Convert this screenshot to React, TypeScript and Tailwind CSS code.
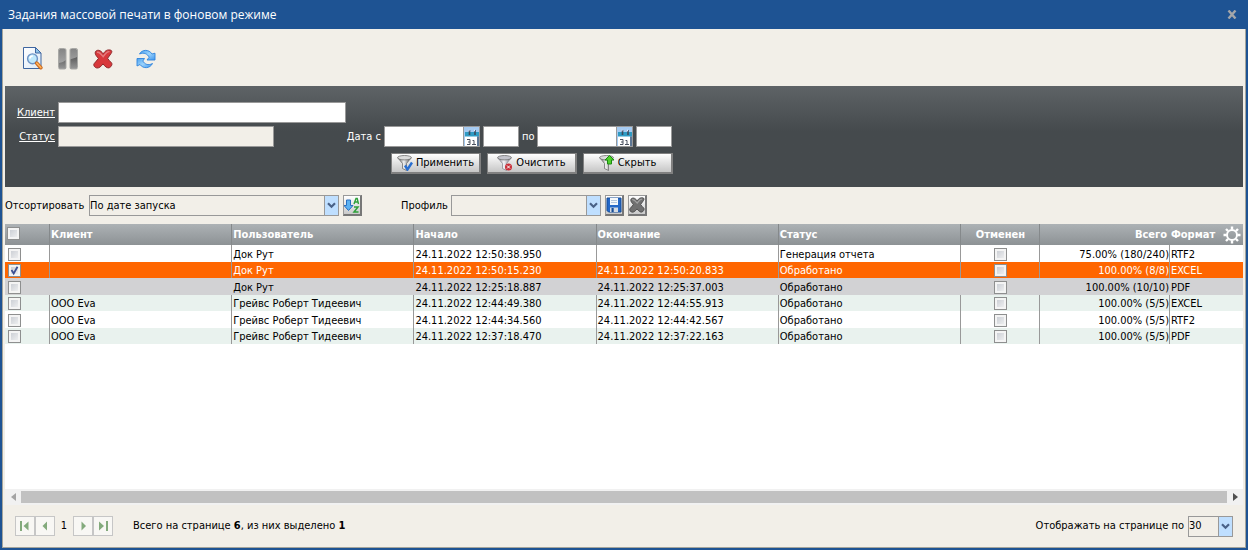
import React, { useState } from "react";

type Job = {
  id: number;
  client: string;
  user: string;
  start: string;
  end: string;
  status: string;
  total: string;
  format: string;
};

const JOBS: Job[] = [
  { id: 1, client: "",        user: "Док Рут",                 start: "24.11.2022 12:50:38.950", end: "",                        status: "Генерация отчета", total: "75.00% (180/240)", format: "RTF2"  },
  { id: 2, client: "",        user: "Док Рут",                 start: "24.11.2022 12:50:15.230", end: "24.11.2022 12:50:20.833", status: "Обработано",       total: "100.00% (8/8)",    format: "EXCEL" },
  { id: 3, client: "",        user: "Док Рут",                 start: "24.11.2022 12:25:18.887", end: "24.11.2022 12:25:37.003", status: "Обработано",       total: "100.00% (10/10)",  format: "PDF"   },
  { id: 4, client: "ООО Eva", user: "Грейвс Роберт Тидеевич",  start: "24.11.2022 12:44:49.380", end: "24.11.2022 12:44:55.913", status: "Обработано",       total: "100.00% (5/5)",    format: "EXCEL" },
  { id: 5, client: "ООО Eva", user: "Грейвс Роберт Тидеевич",  start: "24.11.2022 12:44:34.560", end: "24.11.2022 12:44:42.567", status: "Обработано",       total: "100.00% (5/5)",    format: "RTF2"  },
  { id: 6, client: "ООО Eva", user: "Грейвс Роберт Тидеевич",  start: "24.11.2022 12:37:18.470", end: "24.11.2022 12:37:22.163", status: "Обработано",       total: "100.00% (5/5)",    format: "PDF"   },
];

const FOCUSED_ID = 3;

/* ---------- Icons ---------- */

function PreviewIcon() {
  return (
    <svg width="20" height="23" viewBox="0 0 20 23">
      <defs>
        <linearGradient id="page" x1="0" y1="0" x2="1" y2="1">
          <stop offset="0" stopColor="#fff" />
          <stop offset="1" stopColor="#dce9f7" />
        </linearGradient>
      </defs>
      <path d="M.5 .5h12l5.500 5.500v15.500H.5z" fill="url(#page)" stroke="#3f66a0" />
      <path d="M12.500 .5v5.500h5.500z" fill="#8fc3e8" stroke="#3f66a0" />
      <circle cx="9.500" cy="11.800" r="4.900" fill="#bfe8fb" stroke="#6d92c4" strokeWidth="1.400" />
      <path d="M6.800 11.500a3 3 0 0 1 3-2.500" stroke="#fff" strokeWidth="1.600" fill="none" />
      <path d="M13.800 16.200l4 4.500" stroke="#c8651b" strokeWidth="3.600" strokeLinecap="round" />
      <path d="M13.800 16.200l4 4.300" stroke="#ffb057" strokeWidth="1.800" strokeLinecap="round" />
    </svg>
  );
}

function PauseIcon() {
  return (
    <svg width="20" height="22" viewBox="0 0 20 22">
      <defs>
        <linearGradient id="bar" x1="0" y1="0" x2="0" y2="1">
          <stop offset="0" stopColor="#858585" />
          <stop offset="1" stopColor="#b0b0b0" />
        </linearGradient>
        <linearGradient id="barLow" x1="0" y1="0" x2="0" y2="1">
          <stop offset="0" stopColor="#5c5c5c" />
          <stop offset="1" stopColor="#989898" />
        </linearGradient>
      </defs>
      <rect x="1" y="1" width="7" height="20" rx="1" fill="url(#bar)" />
      <rect x="12" y="1" width="7" height="20" rx="1" fill="url(#bar)" />
      <path d="M1 15c3-.5 5-1.500 7-3v9H1zM12 11.500c3-1 5-1.500 7-2.500v12h-7z" fill="url(#barLow)" />
      <rect x=".5" y=".5" width="7.500" height="20.500" rx="1.500" fill="none" stroke="#a9a9a6" />
      <rect x="12" y=".5" width="7.500" height="20.500" rx="1.500" fill="none" stroke="#a9a9a6" />
    </svg>
  );
}

function CrossIcon({ size, fill, stroke }: { size: number; fill: string; stroke: string }) {
  return (
    <svg width={size} height={size} viewBox="0 0 20 20">
      <path
        d="M2.800 2.200C4.500 .6 7.500 .8 10.200 4.800 12.500 1.200 14.600 .6 17.200 1c2 .4 2 2 .8 3.600L14.600 9.300c1.200 1.600 2.400 3.200 4 4.700 1.200 1.600-1 4.600-2.800 4.900-1.900.2-3.800-1.500-5.800-4-2 2.600-3.800 4.200-5.900 4.100-2.400-.2-4-2.800-3-4.300C2.700 12.700 4 11.500 5.400 9.500 3.600 7.200 1 4.500 2.800 2.200z"
        fill={fill}
        stroke={stroke}
        strokeWidth="1"
      />
      <path d="M4 3.500c2-1 3.500 1 6.200 4.200C12.600 4 14.500 2.400 16.500 2.600" stroke="#fff" strokeOpacity=".35" strokeWidth="1.400" fill="none" />
    </svg>
  );
}

function RefreshIcon() {
  return (
    <svg width="20" height="20" viewBox="0 0 20 20">
      <defs>
        <linearGradient id="arrows" x1="0" y1="0" x2="1" y2="1">
          <stop offset="0" stopColor="#4da3f0" />
          <stop offset=".5" stopColor="#9bd2fb" />
          <stop offset="1" stopColor="#3f96ee" />
        </linearGradient>
      </defs>
      <g fill="url(#arrows)" stroke="#2f83dc" strokeWidth=".9" strokeLinejoin="round">
        <path d="M3.500 5C6 .3 13 0 16 5l3-.8V11h-8l2.200-2.800C11.500 5 8 3 3.500 5z" />
        <path d="M16.500 14.500C14 19.700 7 20 4 15.500L1 17V9.500h7.500L6.800 12C8.500 15 12 17 16.500 14.500z" />
      </g>
    </svg>
  );
}

function FunnelIcon({ children, pale = false }: { children: React.ReactNode; pale?: boolean }) {
  return (
    <svg width="16" height="16" viewBox="0 0 16 16" className="shrink-0">
      <defs>
        <linearGradient id="funnel" x1="0" y1="0" x2="1" y2="0">
          <stop offset="0" stopColor="#5c5c5c" />
          <stop offset=".45" stopColor="#f2f2f2" />
          <stop offset="1" stopColor="#4a4a4a" />
        </linearGradient>
        <linearGradient id="funnelPale" x1="0" y1="0" x2="1" y2="0">
          <stop offset="0" stopColor="#85858f" />
          <stop offset=".45" stopColor="#f4f4f8" />
          <stop offset="1" stopColor="#777782" />
        </linearGradient>
      </defs>
      <path d="M.8 2.800L5.500 8.500v5l4 2v-7l4.700-5.700z" fill={pale ? "url(#funnelPale)" : "url(#funnel)"} stroke={pale ? "#85858e" : "#666"} strokeWidth=".7" />
      <ellipse cx="7.500" cy="2.700" rx="6.900" ry="2.200" fill={pale ? "#c4c4cc" : "#dcdcdc"} stroke="#6f6f6f" strokeWidth=".8" />
      {children}
    </svg>
  );
}

function CalendarIcon() {
  return (
    <svg width="14" height="17" viewBox="0 0 14 17">
      <rect x="0" y="7" width="12" height="10" fill="#fff" />
      <path d="M0 3h14v4.500H0z" fill="#2f9bc4" />
      <path d="M12 7.500h2V17h-2z" fill="#5d7694" />
      <path d="M4.500 1v5M10 1v5" stroke="#3c4a5c" strokeWidth="1.600" />
      <path d="M3.500 1.500h1M9 1.500h1" stroke="#eef" strokeWidth="1.400" />
      <path d="M2 10.500h3v5H2M3 13h2M7.500 11.500h1.500v4M7 15.500h4" stroke="#4b5260" fill="none" />
    </svg>
  );
}

function SortIcon() {
  return (
    <svg width="16" height="17" viewBox="0 0 16 17">
      <path d="M2.500 3h4v5.500H9L4.500 13.500 0 8.500h2.500z" fill="#5cb2f2" stroke="#2a6fc0" />
      <path d="M10 7l2-5.500h1.200L14.500 7M11 5h3" stroke="#2fa13a" strokeWidth="1.400" fill="none" />
      <path d="M10 10h4l-4 5h4.500" stroke="#2fa13a" strokeWidth="1.500" fill="none" />
    </svg>
  );
}

function SaveIcon() {
  return (
    <svg width="16" height="16" viewBox="0 0 16 16">
      <path d="M1 1h14v14H2.500L1 13.500z" fill="#2468c8" stroke="#174c96" />
      <path d="M4 1h8v7H4z" fill="#f4f8fc" />
      <path d="M5 3.500h6M5 5.500h6" stroke="#b4c6dc" />
      <path d="M4 10.500h8V15H4z" fill="#d3dae3" />
      <path d="M5.500 11h2.200v4H5.500z" fill="#174c96" />
    </svg>
  );
}

function Chevron() {
  return (
    <svg width="9" height="7" viewBox="0 0 9 7">
      <path d="M1 1.200l3.500 3.500L8 1.200" stroke="#4a6288" strokeWidth="2.200" fill="none" />
    </svg>
  );
}

function GearIcon() {
  return (
    <svg width="18" height="18" viewBox="0 0 18 18" fill="none" stroke="#fff">
      <circle cx="9" cy="9" r="5" strokeWidth="2" />
      <path
        d="M9 .5v3M9 14.500v3M.5 9h3M14.500 9h3M3 3l2 2M13 13l2 2M3 15l2-2M13 5l2-2"
        strokeWidth="2.400"
      />
    </svg>
  );
}

function PagerIcon({ kind }: { kind: "first" | "prev" | "next" | "last" }) {
  const left = kind === "first" || kind === "prev";
  const withBar = kind === "first" || kind === "last";
  return (
    <svg width="12" height="10" viewBox="0 0 12 10" fill="#83aa7c">
      <path d={left ? (withBar ? "M9.500 .5v9L4.500 5z" : "M8 .5v9L3.500 5z") : withBar ? "M2 .5v9L7 5z" : "M4.500 .5v9L9 5z"} />
      {withBar && <rect x={left ? 1 : 9} y="0" width="2" height="10" />}
    </svg>
  );
}

/* ---------- Controls ---------- */

function Checkbox({ label, checked, onChange }: { label: string; checked: boolean; onChange?: () => void }) {
  return (
    <span className="inline-grid align-top">
      <input
        type="checkbox"
        aria-label={label}
        checked={checked}
        onChange={onChange ?? (() => {})}
        className="col-start-1 row-start-1 size-[13px] appearance-none border border-[#8e8f8f] bg-linear-to-br from-[#c4c8cf] to-[#f6f6f6] shadow-[inset_0_0_0_2px_#f4f4f4]"
      />
      {checked && (
        <svg width="13" height="13" viewBox="0 0 13 13" className="pointer-events-none col-start-1 row-start-1">
          <path d="M3.500 6l2.200 3.500L9.500 2.800" stroke="#3b4f93" strokeWidth="1.800" fill="none" />
        </svg>
      )}
    </span>
  );
}

function Select({ id, options, className, label }: { id: string; options: string[]; className: string; label?: string }) {
  return (
    <div className={`relative h-[21px] ${className}`}>
      <select id={id} aria-label={label} className="block h-full w-full appearance-none border border-[#999] bg-[#f2efe8] pr-4 outline-none">
        {options.map((o) => (
          <option key={o}>{o}</option>
        ))}
      </select>
      <span className="pointer-events-none absolute inset-y-0 right-0 flex w-[15px] items-center justify-center border border-[#999] bg-[#bfdfff]">
        <Chevron />
      </span>
    </div>
  );
}

function DateField({ label, id }: { label: string; id?: string }) {
  return (
    <div className="flex h-[21px] w-24 border border-[#999] bg-white">
      <input id={id} type="text" aria-label={label} className="w-full min-w-0 text-black outline-none" />
      <button type="button" aria-label="Календарь" className="flex w-4 shrink-0 items-end justify-end border-l border-[#999] bg-[#a5cbf2]">
        <CalendarIcon />
      </button>
    </div>
  );
}

function TimeField({ label }: { label: string }) {
  return <input type="text" aria-label={label} className="h-[21px] w-9 border border-[#999] bg-white text-black outline-none" />;
}

function FilterButton({ icon, children }: { icon: React.ReactNode; children: React.ReactNode }) {
  return (
    <button
      type="button"
      className="flex h-[21px] w-[90px] items-center justify-center gap-[3px] border border-r-2 border-b-2 border-[#808080] bg-linear-to-b from-white to-[#c6c6c6] text-black"
    >
      {icon}
      {children}
    </button>
  );
}

function SmallButton({ label, children }: { label: string; children: React.ReactNode }) {
  return (
    <button
      type="button"
      aria-label={label}
      className="flex h-[21px] w-[19px] items-center justify-center border border-r-2 border-b-2 border-t-[#999] border-l-[#999] border-r-[#777] border-b-[#777] bg-linear-to-b from-white to-[#cacaca]"
    >
      {children}
    </button>
  );
}

function PagerButton({ kind, label }: { kind: "first" | "prev" | "next" | "last"; label: string }) {
  return (
    <button type="button" aria-label={label} className="flex size-5 items-center justify-center border border-[#c6c6c6] bg-[#f8f7f4]">
      <PagerIcon kind={kind} />
    </button>
  );
}

/* ---------- Page ---------- */

export default function App() {
  const [selected, setSelected] = useState<number[]>([2]);

  const toggle = (id: number) =>
    setSelected((prev) => (prev.includes(id) ? prev.filter((x) => x !== id) : [...prev, id]));

  const toggleAll = () => setSelected((prev) => (prev.length === JOBS.length ? [] : JOBS.map((j) => j.id)));

  const rowClass = (job: Job, i: number) => {
    if (selected.includes(job.id)) return "bg-[#ff6600] text-white *:border-[#999]";
    if (job.id === FOCUSED_ID) return "bg-[#d2d2d4] *:border-transparent";
    return i % 2 === 1 ? "bg-[#e9f2ee] *:border-[#999]" : "bg-white *:border-[#999]";
  };

  return (
    <div className="flex min-h-screen flex-col bg-[#1e5393] px-[2px] pb-[2px] font-['DejaVu_Sans_Condensed','Noto_Sans',sans-serif] text-[11px] leading-4 text-black">
      {/* Title bar */}
      <header className="flex h-[29px] items-center justify-between px-[6px] text-white">
        <h1 className="font-['Open_Sans','Noto_Sans',sans-serif] text-[12px]">Задания массовой печати в фоновом режиме</h1>
        <button type="button" aria-label="Закрыть" className="flex size-4 items-center justify-center">
          <svg width="10" height="9" viewBox="0 0 10 9">
            <path d="M1.500 .5l7 8M8.500 .5l-7 8" stroke="#a3a6aa" strokeWidth="2.400" />
          </svg>
        </button>
      </header>

      <main className="flex grow flex-col border-x border-b border-[#a5a59c] bg-[#f2efe8] px-[2px]">
        {/* Toolbar */}
        <div className="flex h-[57px] items-center gap-[15px] pt-[2px] pl-[18px]">
          <button type="button" aria-label="Просмотр"><PreviewIcon /></button>
          <button type="button" aria-label="Пауза"><PauseIcon /></button>
          <button type="button" aria-label="Удалить"><CrossIcon size={20} fill="#d8383b" stroke="#8f2a2c" /></button>
          <button type="button" aria-label="Обновить" className="ml-2"><RefreshIcon /></button>
        </div>

        {/* Filter */}
        <form className="flex h-[101px] flex-col bg-linear-to-b from-[#5e6366] to-[#454a4d] to-45% pt-4 text-white">
          <div className="flex items-center gap-[3px]">
            <label htmlFor="client" className="w-[50px] text-right underline">Клиент</label>
            <input id="client" type="text" className="h-[21px] w-72 border border-[#999] bg-white text-black outline-none" />
          </div>
          <div className="mt-[3px] flex items-center gap-[3px]">
            <label htmlFor="status" className="w-[50px] text-right underline">Статус</label>
            <div className="w-[284px]">
              <input id="status" type="text" readOnly className="block h-[21px] w-[216px] border border-[#999] bg-[#f2efe8] text-black outline-none" />
            </div>
            <label htmlFor="from" className="flex w-9 justify-end whitespace-nowrap">Дата с</label>
            <DateField id="from" label="Дата с" />
            <TimeField label="Время с" />
            <label htmlFor="to" className="w-3 whitespace-nowrap">по</label>
            <DateField id="to" label="Дата по" />
            <TimeField label="Время по" />
          </div>
          <div className="mt-[6px] ml-[386px] flex gap-[6px]">
            <FilterButton
              icon={
                <FunnelIcon>
                  <path d="M8 10.500l2.500 4L15 7.500" stroke="#2a6fd0" strokeWidth="2.400" fill="none" />
                </FunnelIcon>
              }
            >
              Применить
            </FilterButton>
            <FilterButton
              icon={
                <FunnelIcon pale>
                  <circle cx="11.500" cy="12" r="3.500" fill="#c9303a" />
                  <path d="M10 10.500l3 3M13 10.500l-3 3" stroke="#fff" />
                </FunnelIcon>
              }
            >
              Очистить
            </FilterButton>
            <FilterButton
              icon={
                <FunnelIcon>
                  <path d="M10.500 .5L15 5h-2.500v4h-4V5H6z" fill="#4fd02c" stroke="#1d8a12" />
                </FunnelIcon>
              }
            >
              Скрыть
            </FilterButton>
          </div>
        </form>

        {/* Sorting and profile */}
        <div className="flex h-[37px] items-center">
          <label htmlFor="sort" className="w-[84px] whitespace-nowrap">Отсортировать</label>
          <Select id="sort" options={["По дате запуска"]} className="w-[250px]" />
          <div className="ml-1 flex w-[58px]">
            <SmallButton label="Порядок сортировки"><SortIcon /></SmallButton>
          </div>
          <label htmlFor="profile" className="w-[50px] whitespace-nowrap">Профиль</label>
          <Select id="profile" options={[""]} className="w-[150px]" />
          <div className="ml-1 flex gap-1">
            <SmallButton label="Сохранить профиль"><SaveIcon /></SmallButton>
            <SmallButton label="Удалить профиль"><CrossIcon size={16} fill="#707070" stroke="#444" /></SmallButton>
          </div>
        </div>

        {/* Jobs */}
        <div className="grow bg-white">
          <table className="w-full table-fixed border-separate border-spacing-0 text-left">
            <colgroup>
              <col className="w-[45px]" />
              <col />
              <col />
              <col />
              <col />
              <col />
              <col className="w-[79px]" />
              <col className="w-[130px]" />
              <col className="w-[73px]" />
            </colgroup>
            <thead>
              <tr className="h-[21px] bg-linear-to-b from-[#adb2b5] to-[#8d9295] text-white *:border-r *:border-[#85898b] *:p-0 *:pl-[1px] *:font-bold">
                <th className="pl-[2px]!"><Checkbox label="Выбрать все" checked={selected.length === JOBS.length} onChange={toggleAll} /></th>
                <th>Клиент</th>
                <th>Пользователь</th>
                <th>Начало</th>
                <th>Окончание</th>
                <th>Статус</th>
                <th className="text-center">Отменен</th>
                <th className="border-r-0! pr-[3px]! text-right">Всего</th>
                <th className="border-r-0!">
                  <div className="flex items-center justify-between pr-[2px]">
                    Формат
                    <button type="button" aria-label="Настройки"><GearIcon /></button>
                  </div>
                </th>
              </tr>
            </thead>
            <tbody>
              {JOBS.map((job, i) => (
                <tr
                  key={job.id}
                  className={`odd:h-[17px] even:h-4 *:border-r *:p-0 *:pt-[2px] *:pl-[1px] *:leading-[14px] *:whitespace-nowrap ${rowClass(job, i)}`}
                >
                  <td className="pl-[3px]!"><Checkbox label={`Задание ${job.id}`} checked={selected.includes(job.id)} onChange={() => toggle(job.id)} /></td>
                  <td>{job.client}</td>
                  <td>{job.user}</td>
                  <td>{job.start}</td>
                  <td>{job.end}</td>
                  <td>{job.status}</td>
                  <td className="text-center"><Checkbox label={`Отменен ${job.id}`} checked={false} /></td>
                  <td className="text-right">{job.total}</td>
                  <td className="border-r-0!">{job.format}</td>
                </tr>
              ))}
            </tbody>
          </table>
        </div>

        {/* Horizontal scroll bar */}
        <div className="flex h-4 items-center bg-[#f1f1f1]">
          <span className="flex w-4 justify-center">
            <svg width="5" height="8" viewBox="0 0 5 8"><path d="M5 0v8L0 4z" fill="#a3a3a3" /></svg>
          </span>
          <span className="h-3 grow bg-[#c1c1c1]" />
          <span className="flex w-4 justify-center">
            <svg width="5" height="8" viewBox="0 0 5 8"><path d="M0 0v8l5-4z" fill="#505050" /></svg>
          </span>
        </div>

        {/* Pager */}
        <footer className="flex h-[42px] items-center justify-between px-[10px]">
          <div className="flex items-center">
            <PagerButton kind="first" label="Первая страница" />
            <PagerButton kind="prev" label="Предыдущая страница" />
            <span className="w-[18px] text-center">1</span>
            <PagerButton kind="next" label="Следующая страница" />
            <PagerButton kind="last" label="Последняя страница" />
            <p className="ml-5">
              Всего на странице <b>{JOBS.length}</b>, из них выделено <b>{selected.length}</b>
            </p>
          </div>
          <div className="flex items-center gap-1">
            <label htmlFor="pageSize">Отображать на странице по</label>
            <Select id="pageSize" options={["30"]} className="w-[45px]" />
          </div>
        </footer>
      </main>
    </div>
  );
}
